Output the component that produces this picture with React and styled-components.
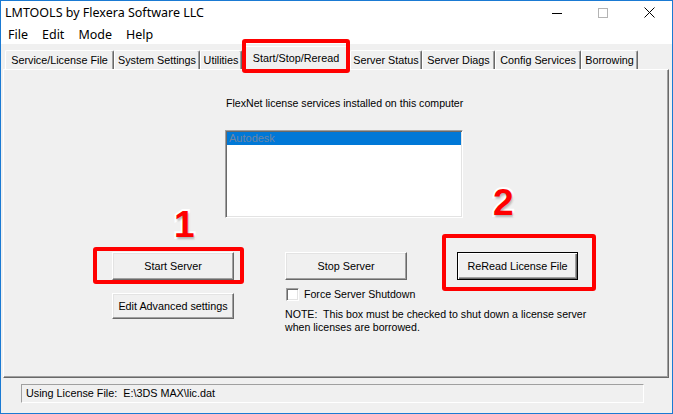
import React from "react";
import styled, { createGlobalStyle } from "styled-components";

const GlobalStyle = createGlobalStyle`
  html, body { margin: 0; padding: 0; background: #fff; }
  body { width: 673px; height: 414px; overflow: hidden; }
  #root { width: 673px; height: 414px; }
`;

const Window = styled.div`
  box-sizing: border-box;
  width: 673px;
  height: 414px;
  border: 1px solid #1a7ad3;
  background: #f0f0f0;
  display: flex;
  flex-direction: column;
  font-family: "Liberation Sans", Arial, sans-serif;
  color: #000;
`;

const TitleBar = styled.div`
  height: 23px;
  background: #fff;
  display: flex;
  align-items: center;
  padding-left: 4px;
  font-family: "Noto Sans", "Open Sans", sans-serif;
  font-size: 12.5px;
`;

const TitleText = styled.span`
  flex: 1;
  white-space: nowrap;
`;

const CaptionButton = styled.div`
  width: 46px;
  height: 100%;
  display: flex;
  align-items: center;
  justify-content: center;
`;

const MenuBar = styled.div`
  height: 20px;
  background: #fff;
  display: flex;
  align-items: center;
  font-family: "Noto Sans", "Open Sans", sans-serif;
  font-size: 12.5px;
`;

const MenuItem = styled.span`
  padding: 0 7px;
`;

const Body = styled.div`
  flex: 1;
  display: flex;
  flex-direction: column;
  padding: 0 3px 0 2px;
`;

const TabStrip = styled.div`
  height: 25px;
  display: flex;
  align-items: flex-end;
  padding-left: 2px;
`;

const Tab = styled.div`
  position: relative;
  z-index: ${(p) => (p.$active ? 2 : 1)};
  box-sizing: border-box;
  width: ${(p) => p.$w}px;
  height: ${(p) => (p.$active ? 24 : 19)}px;
  margin-bottom: ${(p) => (p.$active ? -1 : 0)}px;
  padding-bottom: ${(p) => (p.$active ? 2 : 0)}px;
  background: #f0f0f0;
  border-top: 1px solid #fff;
  border-left: 1px solid #fff;
  border-right: 1px solid #696969;
  box-shadow: inset -1px 0 #a0a0a0;
  border-radius: 2px 2px 0 0;
  display: flex;
  align-items: center;
  justify-content: center;
  font-size: 10.8px;
  white-space: nowrap;
`;

const Panel = styled.div`
  box-sizing: border-box;
  height: 309px;
  border: 1px solid;
  border-color: #fff #696969 #696969 #fff;
  box-shadow: inset -1px -1px #a0a0a0;
  padding: 27px 0 0 108px;
  display: flex;
  flex-direction: column;
  font-size: 10.6px;
`;

const Caption = styled.div`
  margin-left: 114px;
  line-height: 13px;
  white-space: nowrap;
`;

const ListBox = styled.div`
  box-sizing: border-box;
  margin: 20px 0 0 113px;
  width: 238px;
  height: 88px;
  background: #fff;
  border: 1px solid;
  border-color: #a0a0a0 #fff #fff #a0a0a0;
  box-shadow: inset 1px 1px #696969, inset -1px -1px #e3e3e3;
  padding: 1px 1px;
`;

const ListItem = styled.div`
  height: 13px;
  line-height: 13px;
  padding-left: 2px;
  background: ${(p) => (p.$selected ? "#0078d7" : "transparent")};
  color: ${(p) => (p.$selected ? "#6d86a3" : "#000")};
  font-size: 11px;
`;

const Controls = styled.div`
  margin-top: 34px;
  display: grid;
  grid-template-columns: 173px 172px 122px;
  grid-template-rows: 28px auto;
  row-gap: 7px;
  align-items: start;
`;

const Anchor = styled.div`
  position: relative;
  width: ${(p) => p.$w}px;
`;

const Button = styled.button`
  box-sizing: border-box;
  display: block;
  width: ${(p) => p.$w || 122}px;
  height: ${(p) => p.$h || 28}px;
  margin-top: ${(p) => p.$mt || 0}px;
  padding: 0;
  background: #f0f0f0;
  font-family: "Liberation Sans", Arial, sans-serif;
  font-size: 10.8px;
  color: #000;
  border: 1px solid;
  border-color: ${(p) =>
    p.$default ? "#000" : "#fff #696969 #696969 #fff"};
  box-shadow: ${(p) =>
    p.$default
      ? "inset 1px 1px #fff, inset -1px -1px #696969, inset -2px -2px #a0a0a0"
      : "inset -1px -1px #a0a0a0, inset 1px 1px #e3e3e3"};
`;

const Highlight = styled.div`
  position: absolute;
  top: ${(p) => p.$t}px;
  left: ${(p) => p.$l}px;
  right: ${(p) => p.$r}px;
  bottom: ${(p) => p.$b}px;
  border: 4px solid #ff0000;
  border-radius: 3px;
  pointer-events: none;
  z-index: 5;
`;

const Badge = styled.div`
  position: absolute;
  top: ${(p) => p.$t}px;
  left: ${(p) => p.$l}px;
  font-family: "Liberation Sans", Arial, sans-serif;
  font-weight: 700;
  font-size: 37px;
  line-height: 1;
  color: #ff0000;
  -webkit-text-stroke: 4px #fff;
  paint-order: stroke fill;
  text-shadow: 1px 2px 2px rgba(0, 0, 0, 0.3);
  z-index: 6;
`;

const SideBlock = styled.div`
  grid-column: 2 / span 2;
  display: flex;
  flex-direction: column;
`;

const CheckRow = styled.label`
  display: flex;
  align-items: center;
  gap: 5px;
  height: 14px;
  padding-left: 1px;
  white-space: nowrap;
`;

const CheckBox = styled.span`
  box-sizing: border-box;
  width: 13px;
  height: 13px;
  background: #fff;
  border: 1px solid;
  border-color: #a0a0a0 #fff #fff #a0a0a0;
  box-shadow: inset 1px 1px #696969, inset -1px -1px #e3e3e3;
`;

const Note = styled.div`
  margin-top: 7px;
  line-height: 13px;
  white-space: pre;
`;

const StatusRow = styled.div`
  padding: 6px 0 0 18px;
`;

const StatusField = styled.div`
  box-sizing: border-box;
  width: 623px;
  height: 19px;
  border: 1px solid;
  border-color: #a0a0a0 #fff #fff #a0a0a0;
  padding-left: 4px;
  font-size: 10.8px;
  line-height: 17px;
  white-space: pre;
`;

const tabs = [
  ["Service/License File", 109],
  ["System Settings", 86],
  ["Utilities", 42],
  ["Start/Stop/Reread", 108, true],
  ["Server Status", 72],
  ["Server Diags", 73],
  ["Config Services", 86],
  ["Borrowing", 57],
];

export default function App() {
  return (
    <>
      <GlobalStyle />
      <Window>
        <TitleBar>
          <TitleText>LMTOOLS by Flexera Software LLC</TitleText>
          <CaptionButton>
            <svg width="10" height="10" viewBox="0 0 10 10">
              <line x1="0" y1="5.5" x2="10" y2="5.5" stroke="#000" strokeWidth="1" />
            </svg>
          </CaptionButton>
          <CaptionButton>
            <svg width="10" height="10" viewBox="0 0 10 10">
              <rect x="0.5" y="0.5" width="9" height="9" fill="none" stroke="#b4b4b4" strokeWidth="1" />
            </svg>
          </CaptionButton>
          <CaptionButton>
            <svg width="11" height="11" viewBox="0 0 11 11">
              <path d="M0.5 0.5 L10.5 10.5 M10.5 0.5 L0.5 10.5" stroke="#000" strokeWidth="1" />
            </svg>
          </CaptionButton>
        </TitleBar>
        <MenuBar>
          <MenuItem>File</MenuItem>
          <MenuItem>Edit</MenuItem>
          <MenuItem>Mode</MenuItem>
          <MenuItem>Help</MenuItem>
        </MenuBar>
        <Body>
          <TabStrip>
            {tabs.map(([label, w, active]) => (
              <Tab key={label} $w={w} $active={active}>
                {label}
                {active && <Highlight $t={-8} $l={-1} $r={-1} $b={-3} />}
              </Tab>
            ))}
          </TabStrip>
          <Panel>
            <Caption>FlexNet license services installed on this computer</Caption>
            <ListBox>
              <ListItem $selected>Autodesk</ListItem>
            </ListBox>
            <Controls>
              <Anchor $w={122}>
                <Button>Start Server</Button>
                <Highlight $t={-5} $l={-19} $r={-10} $b={-4} />
                <Badge $t={-46} $l={62}>1</Badge>
              </Anchor>
              <Button>Stop Server</Button>
              <Anchor $w={121}>
                <Button $w={121} $default>ReRead License File</Button>
                <Highlight $t={-18} $l={-15} $r={-18} $b={-11} />
                <Badge $t={-68} $l={36}>2</Badge>
              </Anchor>
              <Button $h={26} $mt={6}>Edit Advanced settings</Button>
              <SideBlock>
                <CheckRow>
                  <CheckBox />
                  Force Server Shutdown
                </CheckRow>
                <Note>
                  {"NOTE:  This box must be checked to shut down a license server\nwhen licenses are borrowed."}
                </Note>
              </SideBlock>
            </Controls>
          </Panel>
          <StatusRow>
            <StatusField>{"Using License File:  E:\\3DS MAX\\lic.dat"}</StatusField>
          </StatusRow>
        </Body>
      </Window>
    </>
  );
}
